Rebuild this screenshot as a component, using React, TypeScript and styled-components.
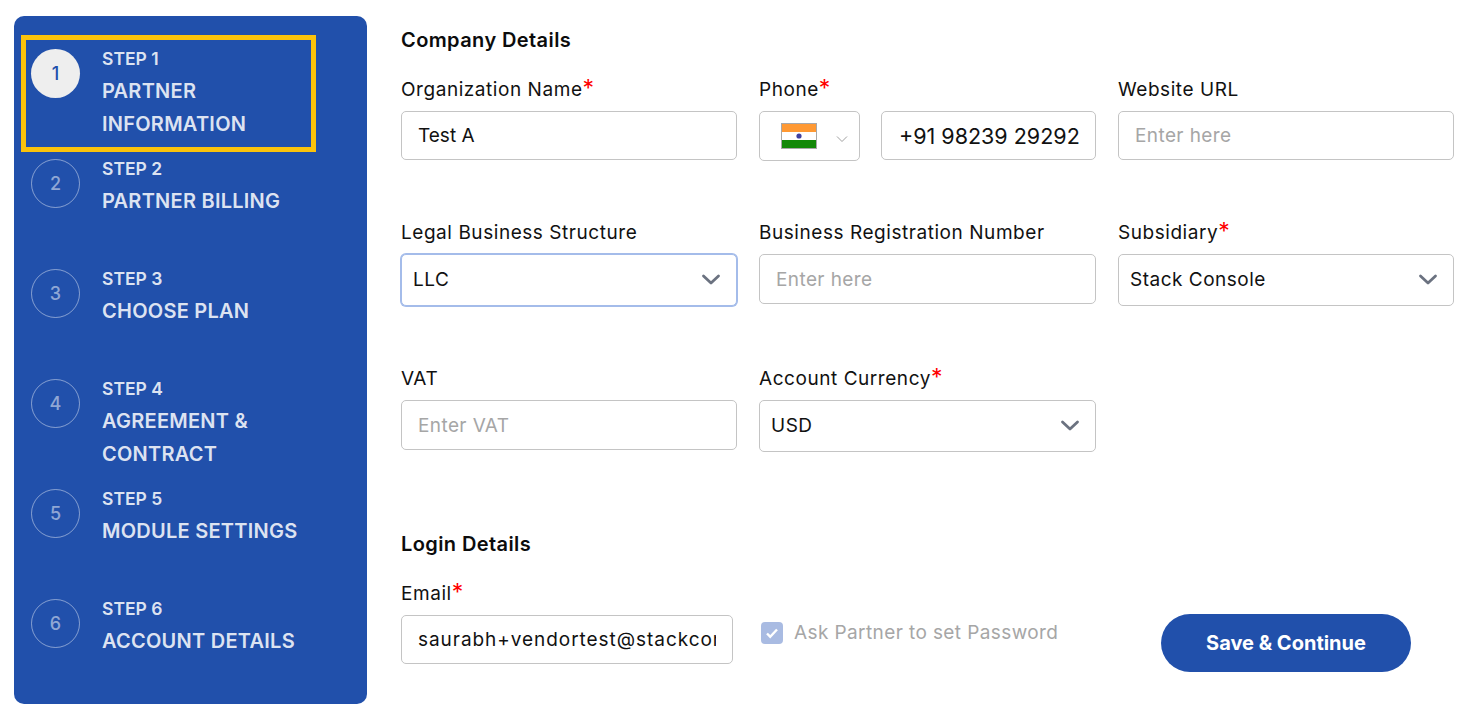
import React from "react";
import styled, { createGlobalStyle } from "styled-components";

const Global = createGlobalStyle`
  html, body { margin: 0; padding: 0; background: #fff; overflow: hidden; }
  * { box-sizing: border-box; }
  body { font-family: Inter, "Noto Sans", sans-serif; color: #111; }
`;

const Page = styled.div`
  width: 1467px;
  height: 707px;
  display: flex;
  padding: 16px 13px 3px 14px;
`;

const Sidebar = styled.aside`
  width: 353px;
  flex: none;
  background: #2150ab;
  border-radius: 10px;
  padding: 24px 0 0 12px;
  display: flex;
  flex-direction: column;
  gap: 3px;
`;

const Step = styled.div<{ $active?: boolean }>`
  width: 285px;
  height: 107px;
  padding: 9px 0 0 5px;
  display: flex;
  gap: 22px;
  outline: ${(p) => (p.$active ? "5px solid #fbc30c" : "none")};
`;

const Circle = styled.div<{ $active?: boolean }>`
  width: 49px;
  height: 49px;
  flex: none;
  border-radius: 50%;
  display: flex;
  align-items: center;
  justify-content: center;
  font-size: 18px;
  font-weight: 500;
  background: ${(p) => (p.$active ? "#eeeeee" : "transparent")};
  color: ${(p) => (p.$active ? "#2150ab" : "rgba(255,255,255,.5)")};
  border: ${(p) => (p.$active ? "none" : "1px solid rgba(255,255,255,.45)")};
`;

const StepText = styled.div`
  margin-top: -3px;
  color: rgba(255, 255, 255, 0.86);
`;

const StepLabel = styled.div`
  font-size: 17.5px;
  font-weight: 600;
  line-height: 24px;
  margin-top: 1px;
  margin-bottom: 4px;
`;

const StepTitle = styled.div`
  font-size: 20px;
  font-weight: 600;
  line-height: 33px;
  letter-spacing: 0.25px;
  white-space: pre-line;
`;

const Main = styled.main`
  flex: 1;
  padding: 11px 0 0 34px;
  display: flex;
  flex-direction: column;
`;

const Heading = styled.h2`
  margin: 0;
  font-size: 20px;
  font-weight: 600;
  line-height: 26px;
  letter-spacing: 0.4px;
  color: #0c0c0c;
`;

const Grid = styled.div`
  display: grid;
  grid-template-columns: 336px 337px 336px;
  column-gap: 22px;
  margin-top: 24px;
`;

const Field = styled.div<{ $h: number }>`
  height: ${(p) => p.$h}px;
  display: flex;
  flex-direction: column;
`;

const Label = styled.label`
  font-size: 19px;
  line-height: 26px;
  letter-spacing: 0.55px;
  color: #111;
  margin-bottom: 8px;
  white-space: nowrap;
`;

const Req = styled.span`
  color: #f00;
  font-size: 23px;
  line-height: 0;
`;

const Input = styled.input<{ $tall?: boolean }>`
  width: 100%;
  height: ${(p) => (p.$tall ? 50 : 49)}px;
  padding: 0 16px;
  border: 1px solid #c4c4c4;
  border-radius: 5px;
  font: 400 19px Inter, sans-serif;
  color: #111;
  background: #fff;
  outline: none;
  &::placeholder { color: #a6a6a6; opacity: 1; letter-spacing: 0.4px; }
`;

const EmailInput = styled(Input)`
  letter-spacing: 0.95px;
`;

const SelectBox = styled.div<{ $focus?: boolean }>`
  height: 52px;
  padding: 0 14px 2px 11px;
  display: flex;
  align-items: center;
  justify-content: space-between;
  border: 1px solid ${(p) => (p.$focus ? "#a4bcea" : "#c4c4c4")};
  box-shadow: ${(p) => (p.$focus ? "0 0 0 1px #a4bcea" : "none")};
  border-radius: 5px;
  font-size: 19px;
  letter-spacing: 0.5px;
  color: #111;
  background: #fff;
`;

const PhoneRow = styled.div`
  display: flex;
  gap: 21px;
`;

const FlagBox = styled.div`
  width: 101px;
  height: 50px;
  flex: none;
  border: 1px solid #c4c4c4;
  border-radius: 5px;
  padding-left: 21px;
  display: flex;
  align-items: center;
  gap: 19px;
`;

const PhoneInput = styled(Input)`
  flex: 1;
  min-width: 0;
  width: auto;
  padding: 0 0 0 17px;
  font-size: 21.5px;
`;

const SecondHeading = styled(Heading)`
  margin-top: 13px;
`;

const LoginRow = styled.div`
  display: flex;
  align-items: flex-start;
  margin-top: 24px;
`;

const EmailField = styled.div`
  width: 332px;
  flex: none;
  display: flex;
  flex-direction: column;
`;

const CheckWrap = styled.div`
  margin: 40px 0 0 28px;
  display: flex;
  align-items: center;
  gap: 11px;
  width: 400px;
  flex: none;
  font-size: 19px;
  letter-spacing: 0.4px;
  color: #a6a6a6;
  white-space: nowrap;
`;

const CheckBox = styled.div`
  width: 22px;
  height: 22px;
  border-radius: 4px;
  background: #a9bbe2;
  display: flex;
  align-items: center;
  justify-content: center;
`;

const SaveButton = styled.button`
  width: 250px;
  height: 58px;
  margin-top: 33px;
  border: none;
  border-radius: 29px;
  background: #2150ab;
  color: #fff;
  font: 700 20px Inter, sans-serif;
`;

const Chevron = () => (
  <svg width="22" height="22" viewBox="0 0 22 22" fill="none">
    <path d="M3.5 8l7.5 7 7.5-7" stroke="#6b7280" strokeWidth="2.8" strokeLinecap="round" strokeLinejoin="round" />
  </svg>
);

const Flag = () => (
  <svg width="36" height="26" viewBox="0 0 36 26">
    <rect width="36" height="26" fill="#a8a8a8" />
    <rect x="1" y="1" width="34" height="8" fill="#ff9933" />
    <rect x="1" y="9" width="34" height="8" fill="#ffffff" />
    <rect x="1" y="17" width="34" height="8" fill="#138808" />
    <circle cx="18" cy="13" r="2.6" fill="#000080" opacity=".75" />
  </svg>
);

const SmallChevron = () => (
  <svg width="12" height="8" viewBox="0 0 12 8" fill="none" style={{ marginTop: 5 }}>
    <path d="M1 1.5l5 5 5-5" stroke="#a0a0a0" strokeWidth="1" />
  </svg>
);

const steps = [
  ["STEP 1", "PARTNER\nINFORMATION"],
  ["STEP 2", "PARTNER BILLING"],
  ["STEP 3", "CHOOSE PLAN"],
  ["STEP 4", "AGREEMENT &\nCONTRACT"],
  ["STEP 5", "MODULE SETTINGS"],
  ["STEP 6", "ACCOUNT DETAILS"],
];

export default function App() {
  return (
    <Page>
      <Global />
      <Sidebar>
        {steps.map(([label, title], i) => (
          <Step key={label} $active={i === 0}>
            <Circle $active={i === 0}>{i + 1}</Circle>
            <StepText>
              <StepLabel>{label}</StepLabel>
              <StepTitle>{title}</StepTitle>
            </StepText>
          </Step>
        ))}
      </Sidebar>
      <Main>
        <Heading>Company Details</Heading>
        <Grid>
          <Field $h={143}>
            <Label>Organization Name<Req>*</Req></Label>
            <Input readOnly value="Test A" />
          </Field>
          <Field $h={143}>
            <Label>Phone<Req>*</Req></Label>
            <PhoneRow>
              <FlagBox>
                <Flag />
                <SmallChevron />
              </FlagBox>
              <PhoneInput readOnly value="+91 98239 29292" />
            </PhoneRow>
          </Field>
          <Field $h={143}>
            <Label>Website URL</Label>
            <Input readOnly placeholder="Enter here" />
          </Field>

          <Field $h={146}>
            <Label>Legal Business Structure</Label>
            <SelectBox $focus>LLC<Chevron /></SelectBox>
          </Field>
          <Field $h={146}>
            <Label>Business Registration Number</Label>
            <Input $tall readOnly placeholder="Enter here" />
          </Field>
          <Field $h={146}>
            <Label>Subsidiary<Req>*</Req></Label>
            <SelectBox>Stack Console<Chevron /></SelectBox>
          </Field>

          <Field $h={152}>
            <Label>VAT</Label>
            <Input $tall readOnly placeholder="Enter VAT" />
          </Field>
          <Field $h={152}>
            <Label>Account Currency<Req>*</Req></Label>
            <SelectBox>USD<Chevron /></SelectBox>
          </Field>
        </Grid>
        <SecondHeading>Login Details</SecondHeading>
        <LoginRow>
          <EmailField>
            <Label>Email<Req>*</Req></Label>
            <EmailInput readOnly value="saurabh+vendortest@stackconsole.io" />
          </EmailField>
          <CheckWrap>
            <CheckBox>
              <svg width="16" height="16" viewBox="0 0 16 16" fill="none">
                <path d="M3 8.5l3.2 3.2L13 4.5" stroke="#fff" strokeWidth="2.4" />
              </svg>
            </CheckBox>
            Ask Partner to set Password
          </CheckWrap>
          <SaveButton>Save &amp; Continue</SaveButton>
        </LoginRow>
      </Main>
    </Page>
  );
}
